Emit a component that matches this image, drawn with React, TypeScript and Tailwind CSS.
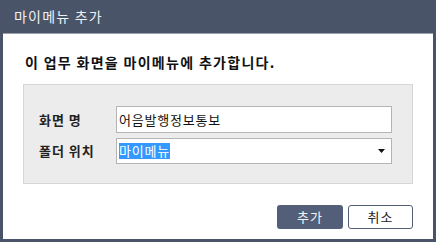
export default function App() {
  const font = { fontFamily: '"Noto Sans CJK KR", "Noto Sans", sans-serif' };

  return (
    <div className="w-[436px] h-[242px] bg-[#4a5468] flex flex-col" style={font}>
      <div className="h-[33px] shrink-0 flex items-center px-[14px] text-[14px] tracking-[1.2px] text-[#eef0f4]">
        마이메뉴 추가
      </div>
      <div className="flex-1 mx-[3px] mb-[3px] bg-white border-t border-[#9ca2ad] flex flex-col px-[20px]">
        <h1 className="pt-[18px] pl-[2px] text-[14px] leading-[20px] tracking-[1.3px] font-bold text-[#111]">
          이 업무 화면을 마이메뉴에 추가합니다.
        </h1>

        <div className="mt-[12px] h-[100px] bg-[#ececec] border border-[#d6d6d6] pt-[21px] pl-[15px] pr-[20px] flex flex-col gap-[5px]">
          <div className="flex items-center">
            <span className="w-[77px] text-[13px] tracking-[1px] font-bold text-[#222]">화면 명</span>
            <div className="flex-1 h-[27px] bg-white border border-[#b4b4b4] flex items-center pl-[2px] text-[13px] tracking-[0.8px] text-[#111]">
              어음발행정보통보
            </div>
          </div>
          <div className="flex items-center">
            <span className="w-[77px] text-[13px] tracking-[1px] font-bold text-[#222]">폴더 위치</span>
            <div className="flex-1 h-[26px] bg-white border border-[#b4b4b4] flex items-center pl-[2px] pr-[6px] text-[13px] tracking-[0.8px]">
              <span className="bg-[#3399ff] text-white leading-[16px]">마이메뉴</span>
              <svg className="ml-auto" width="7" height="4" viewBox="0 0 7 4">
                <path d="M0 0h7L3.5 4z" fill="#111" />
              </svg>
            </div>
          </div>
        </div>

        <div className="mt-[21px] flex justify-end gap-[5px]">
          <button className="w-[66px] h-[24px] rounded-[3px] bg-[#535f78] text-[13px] tracking-[1px] text-[#f2f4f8]">
            추가
          </button>
          <button className="w-[65px] h-[24px] rounded-[3px] bg-white border border-[#535f78] text-[13px] tracking-[1px] text-[#222]">
            취소
          </button>
        </div>
      </div>
    </div>
  );
}
